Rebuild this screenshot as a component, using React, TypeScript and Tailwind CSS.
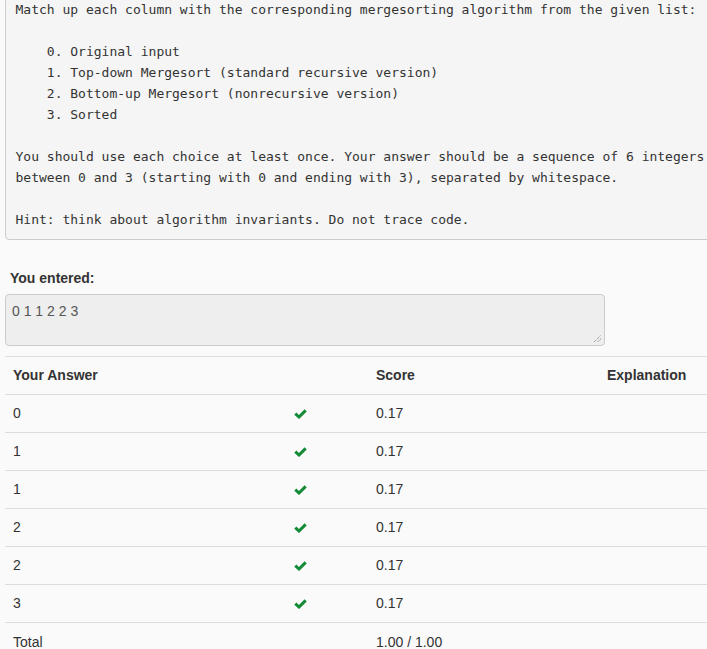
const rows = ["0", "1", "1", "2", "2", "3"];

const question = `Match up each column with the corresponding mergesorting algorithm from the given list:

    0. Original input
    1. Top-down Mergesort (standard recursive version)
    2. Bottom-up Mergesort (nonrecursive version)
    3. Sorted

You should use each choice at least once. Your answer should be a sequence of 6 integers
between 0 and 3 (starting with 0 and ending with 3), separated by whitespace.

Hint: think about algorithm invariants. Do not trace code.`;

function Check() {
  return (
    <svg width="13" height="10" viewBox="0 0 13 10" className="block">
      <path d="M1.3 4.6 L5 8 L11.7 1.4" fill="none" stroke="#138a36" strokeWidth="3" strokeLinejoin="miter" />
    </svg>
  );
}

export default function App() {
  return (
    <div className="w-[707px] h-[649px] overflow-hidden bg-[#fafafa] text-[#333] font-['Liberation_Sans',Arial,sans-serif] text-[14px]">
      <div className="w-[780px] pl-[5px]">
        <pre className="mt-[-12px] p-[9.5px] bg-[#f5f5f5] border border-[#cccccc] rounded-[4px] font-['DejaVu_Sans_Mono',monospace] text-[13px] leading-[21px] text-[#333] whitespace-pre">
          {question}
        </pre>

        <div className="mt-[28px] ml-[5px] font-bold leading-5">You entered:</div>
        <div className="mt-[6px] w-[600px] h-[52px] px-[6px] py-[6px] bg-[#eeeeee] border border-[#cccccc] rounded-[4px] text-[#555] leading-5 relative">
          0 1 1 2 2 3
          <svg width="9" height="9" viewBox="0 0 9 9" className="absolute right-[2px] bottom-[2px]">
            <path d="M1 8 L8 1 M4.5 8 L8 4.5" stroke="#777" strokeWidth="1" strokeDasharray="1 1" />
          </svg>
        </div>

        <div className="mt-[10px] w-[702px] border-t border-[#dddddd]">
          <div className="grid grid-cols-[281px_82px_231px_108px] h-[38px] items-center font-bold border-b border-[#dddddd]">
            <div className="px-2">Your Answer</div>
            <div className="px-2"></div>
            <div className="px-2">Score</div>
            <div className="px-2">Explanation</div>
          </div>
          {rows.map((r, i) => (
            <div key={i} className="grid grid-cols-[281px_82px_231px_108px] h-[38px] items-center border-b border-[#dddddd]">
              <div className="px-2">{r}</div>
              <div className="px-2"><Check /></div>
              <div className="px-2">0.17</div>
              <div className="px-2"></div>
            </div>
          ))}
          <div className="grid grid-cols-[281px_82px_231px_108px] h-[38px] items-center">
            <div className="px-2">Total</div>
            <div className="px-2"></div>
            <div className="px-2">1.00 / 1.00</div>
            <div className="px-2"></div>
          </div>
        </div>
      </div>
    </div>
  );
}
